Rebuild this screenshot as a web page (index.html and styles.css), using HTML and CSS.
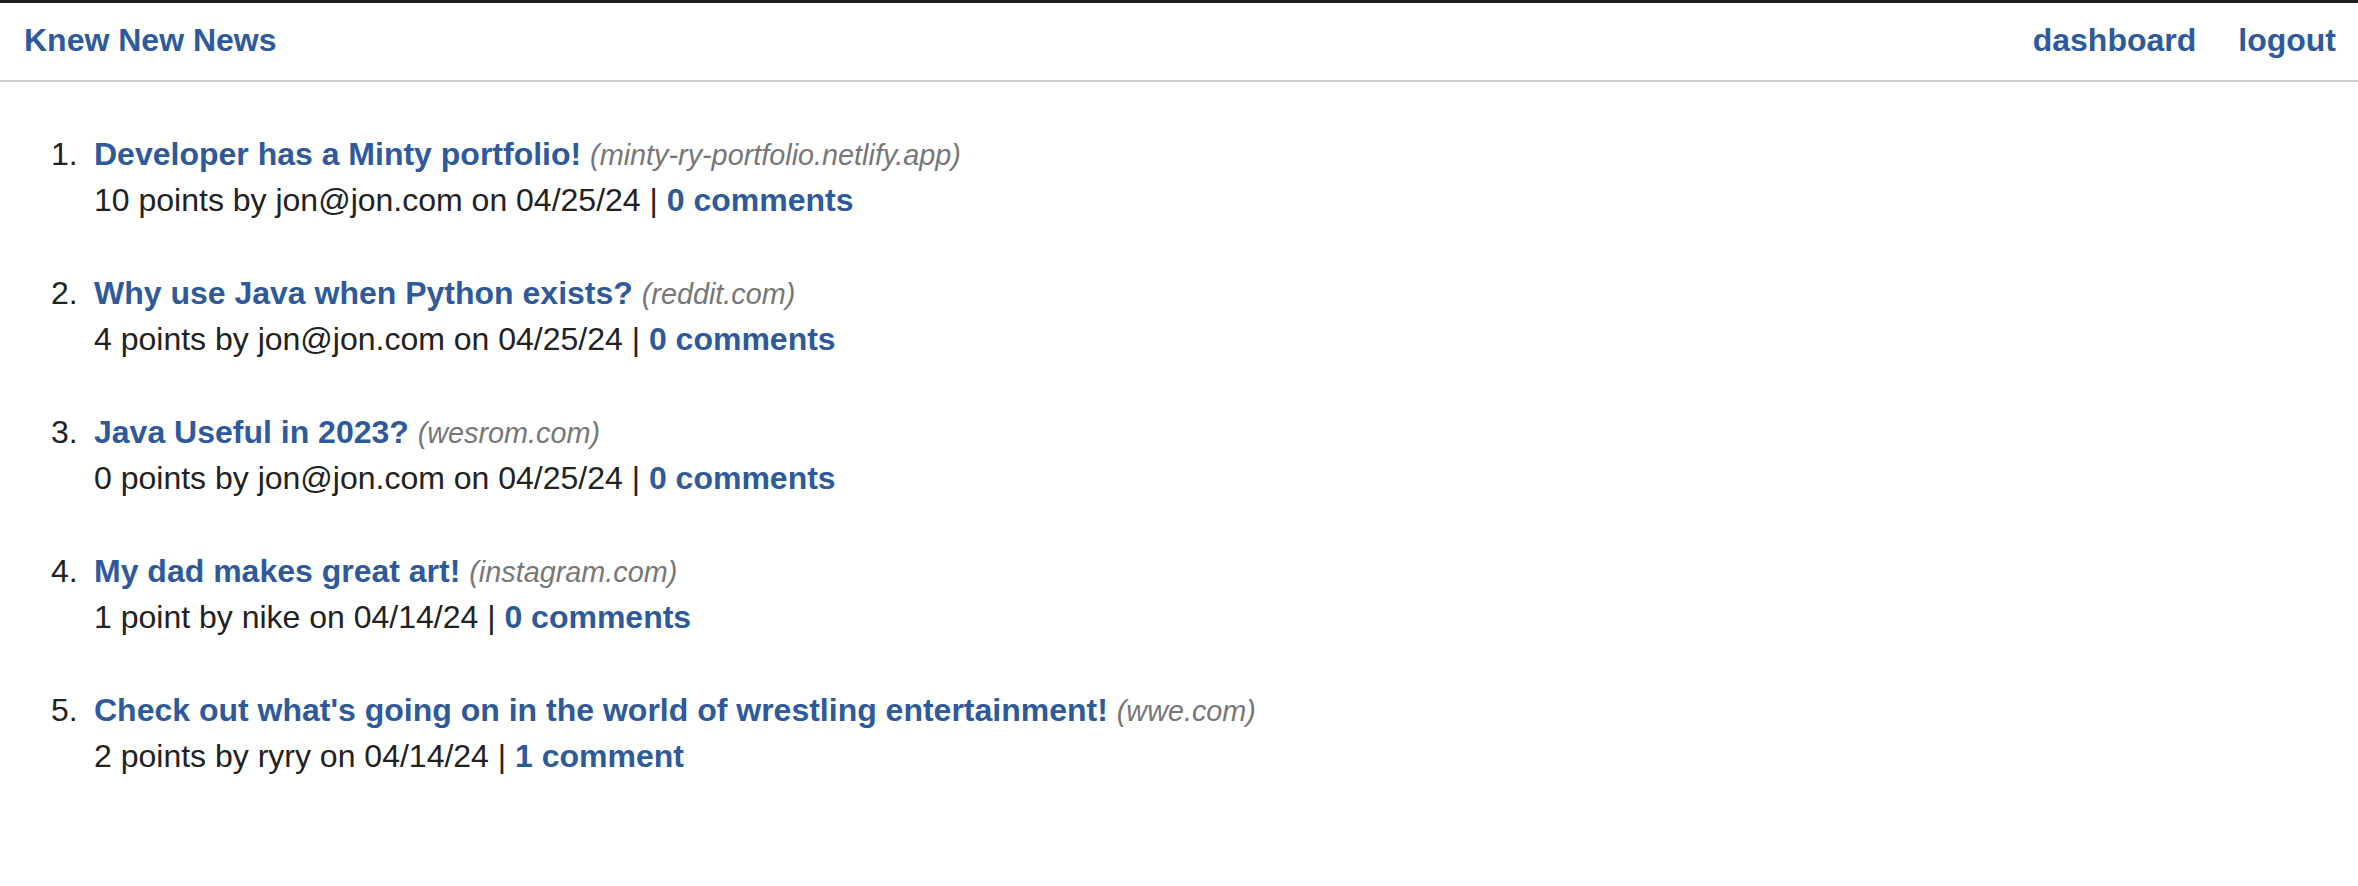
FILE: index.html
```html
<!DOCTYPE html>
<html lang="en">
<head>
<meta charset="utf-8">
<title>Knew New News</title>
<link rel="stylesheet" href="styles.css">
</head>
<body>
<div class="chrome"></div>
<header class="topbar">
  <a class="brand" href="#">Knew New News</a>
  <nav class="nav">
    <a href="#">dashboard</a>
    <a href="#">logout</a>
  </nav>
</header>
<main>
  <ol class="stories">
    <li class="story">
      <span class="num">1.</span>
      <div class="body">
        <div class="title-line"><a class="title" href="#">Developer has a Minty portfolio!</a> <span class="domain">(minty-ry-portfolio.netlify.app)</span></div>
        <div class="meta">10 points by jon@jon.com on 04/25/24 | <a href="#">0 comments</a></div>
      </div>
    </li>
    <li class="story">
      <span class="num">2.</span>
      <div class="body">
        <div class="title-line"><a class="title" href="#">Why use Java when Python exists?</a> <span class="domain">(reddit.com)</span></div>
        <div class="meta">4 points by jon@jon.com on 04/25/24 | <a href="#">0 comments</a></div>
      </div>
    </li>
    <li class="story">
      <span class="num">3.</span>
      <div class="body">
        <div class="title-line"><a class="title" href="#">Java Useful in 2023?</a> <span class="domain">(wesrom.com)</span></div>
        <div class="meta">0 points by jon@jon.com on 04/25/24 | <a href="#">0 comments</a></div>
      </div>
    </li>
    <li class="story">
      <span class="num">4.</span>
      <div class="body">
        <div class="title-line"><a class="title" href="#">My dad makes great art!</a> <span class="domain">(instagram.com)</span></div>
        <div class="meta">1 point by nike on 04/14/24 | <a href="#">0 comments</a></div>
      </div>
    </li>
    <li class="story">
      <span class="num">5.</span>
      <div class="body">
        <div class="title-line"><a class="title" href="#">Check out what's going on in the world of wrestling entertainment!</a> <span class="domain">(wwe.com)</span></div>
        <div class="meta">2 points by ryry on 04/14/24 | <a href="#">1 comment</a></div>
      </div>
    </li>
  </ol>
</main>
</body>
</html>
```

FILE: styles.css
```css
html, body {
  margin: 0;
  padding: 0;
  background: #ffffff;
}

body {
  font-family: "Liberation Sans", Arial, Helvetica, sans-serif;
  color: #222222;
}

a {
  color: #2e5a9c;
  text-decoration: none;
  font-weight: bold;
}

.chrome {
  height: 3px;
  background: #1d1d1d;
}

.topbar {
  display: flex;
  justify-content: space-between;
  align-items: center;
  height: 79px;
  padding: 0 22px 4px 26px;
  border-bottom: 2px solid #cfcfcf;
  box-sizing: border-box;
  font-size: 32px;
  line-height: 42px;
}

.topbar .brand {
  margin-left: -2px;
}

.nav {
  display: flex;
  gap: 42px;
}

.stories {
  list-style: none;
  margin: 48px 0 0 0;
  padding: 0 0 0 51px;
  font-size: 32px;
  line-height: 42px;
}

.story {
  display: grid;
  grid-template-columns: 43px 1fr;
  margin-bottom: 48px;
}

.num {
  color: #222222;
  line-height: 49px;
}

.title-line {
  line-height: 49px;
}

.domain {
  font-style: italic;
  font-size: 28.8px;
  line-height: 1;
  color: #777777;
}

.meta {
  color: #222222;
  line-height: 42px;
}
```
